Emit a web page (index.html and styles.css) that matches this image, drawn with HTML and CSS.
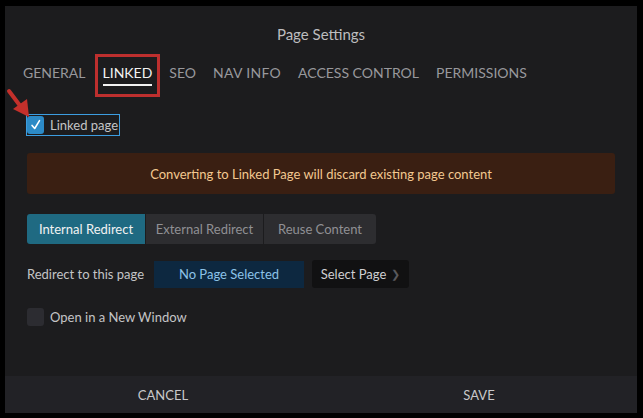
FILE: index.html
```html
<!DOCTYPE html>
<html lang="en">
<head>
  <meta charset="UTF-8" />
  <title>Page Settings</title>
  <link rel="stylesheet" href="styles.css">
</head>
<body>
  <div class="modal">
    <div class="modal-body">
      <h1 class="modal-title">Page Settings</h1>

      <nav class="tabs">
        <span class="tab">GENERAL</span>
        <span class="tab active">LINKED</span>
        <span class="tab">SEO</span>
        <span class="tab">NAV INFO</span>
        <span class="tab">ACCESS CONTROL</span>
        <span class="tab">PERMISSIONS</span>
      </nav>

      <div class="linked-row">
        <label class="check-label highlighted">
          <span class="checkbox checked">
            <svg viewBox="0 0 16 16" width="14" height="14"><path d="M3.5 8.5 L6.5 12 L12 3" fill="none" stroke="#fff" stroke-width="1.8" stroke-linecap="round" stroke-linejoin="round"/></svg>
          </span>
          Linked page
        </label>
        <svg class="arrow" width="28" height="32" viewBox="0 0 28 32">
          <path d="M3 3 L15 19" stroke="#c4302b" stroke-width="4" stroke-linecap="round"/>
          <path d="M7 21 L23 29 L21 11 Z" fill="#c4302b"/>
        </svg>
      </div>

      <div class="warning">Converting to Linked Page will discard existing page content</div>

      <div class="segmented">
        <button class="seg active">Internal Redirect</button>
        <button class="seg">External Redirect</button>
        <button class="seg">Reuse Content</button>
      </div>

      <div class="redirect-row">
        <span class="redirect-label">Redirect to this page</span>
        <span class="page-value">No Page Selected</span>
        <button class="select-btn">Select Page <span class="chevron">&#x276F;</span></button>
      </div>

      <label class="check-label">
        <span class="checkbox"></span>
        Open in a New Window
      </label>
    </div>

    <footer class="modal-footer">
      <button class="footer-btn">CANCEL</button>
      <button class="footer-btn">SAVE</button>
    </footer>
  </div>
</body>
</html>
```

FILE: styles.css
```css
* {
  box-sizing: border-box;
  margin: 0;
  padding: 0;
}

html, body {
  background: #000;
  height: 100%;
}

body {
  font-family: Lato, 'Open Sans', sans-serif;
  padding: 6px 6px 5px 5px;
  overflow: hidden;
}

.modal {
  width: 632px;
  height: 407px;
  background: #1c1c1e;
  display: flex;
  flex-direction: column;
}

.modal-body {
  flex: 1;
  padding: 0 22px;
  position: relative;
}

.modal-title {
  font-size: 15px;
  font-weight: normal;
  color: #bdbdbf;
  text-align: center;
  margin-top: 19px;
  line-height: 18px;
}

.tabs {
  display: flex;
  margin-top: 17px;
  margin-left: -4px;
}

.tab {
  font-size: 14px;
  color: #98989c;
  padding: 4px 0 6px;
  margin-right: 17px;
  white-space: nowrap;
  position: relative;
}

.tab:nth-child(4) {
  letter-spacing: 0.3px;
}

.tab.active {
  color: #f2f2f2;
}

.tab.active::after {
  content: '';
  position: absolute;
  left: 0;
  right: 0;
  bottom: 1px;
  height: 2px;
  background: #f2f2f2;
}

.tab.active::before {
  content: '';
  position: absolute;
  left: -8px;
  right: -8px;
  top: -6px;
  bottom: -10px;
  border: 3px solid #bd2f2e;
}

.linked-row {
  position: relative;
  margin-top: 27px;
}

.arrow {
  position: absolute;
  left: -21px;
  top: -26px;
}

.check-label {
  display: inline-flex;
  align-items: center;
  gap: 6px;
  font-size: 13px;
  color: #c4c4c6;
}

.check-label.highlighted {
  border: 1px solid #3c9de0;
  padding: 1px 1px 1px 0;
  margin-left: -1px;
}

.checkbox {
  width: 17px;
  height: 18px;
  border-radius: 3px;
  background: #2c2c31;
  display: inline-flex;
  align-items: center;
  justify-content: center;
}

.checkbox.checked {
  background: #2c8ac6;
}

.warning {
  margin-top: 17px;
  height: 41px;
  background: #3a1f12;
  border-radius: 3px;
  color: #f3c890;
  font-size: 13px;
  display: flex;
  align-items: center;
  justify-content: center;
}

.segmented {
  display: inline-flex;
  margin-top: 20px;
  border-radius: 3px;
  overflow: hidden;
}

.seg {
  font-family: inherit;
  font-size: 13px;
  height: 30px;
  border: none;
  background: #2d2d30;
  color: #909094;
  white-space: nowrap;
  border-left: 1px solid #1c1c1e;
}

.seg:first-child {
  border-left: none;
}

.seg.active {
  background: #1f6a82;
  color: #f2f2f2;
  width: 118px;
}

.seg:nth-child(2) {
  width: 118px;
}

.seg:nth-child(3) {
  width: 113px;
}

.redirect-row {
  display: flex;
  align-items: center;
  margin-top: 16px;
  font-size: 13px;
}

.redirect-label {
  color: #c4c4c6;
  width: 127px;
}

.page-value {
  width: 150px;
  height: 27px;
  background: #0d2840;
  color: #8cc2e8;
  display: flex;
  align-items: center;
  justify-content: center;
}

.select-btn {
  font-family: inherit;
  font-size: 13px;
  margin-left: 8px;
  height: 28px;
  width: 97px;
  border: none;
  border-radius: 3px;
  background: #111112;
  color: #cfcfd1;
  display: flex;
  align-items: center;
  justify-content: center;
  gap: 5px;
}

.chevron {
  color: #58585c;
  font-size: 11px;
}

.redirect-row + .check-label {
  margin-top: 20px;
}

.modal-footer {
  height: 37px;
  background: #222226;
  display: flex;
}

.footer-btn {
  flex: 1;
  border: none;
  background: transparent;
  font-family: inherit;
  font-size: 13px;
  color: #c8c8ca;
}
```
